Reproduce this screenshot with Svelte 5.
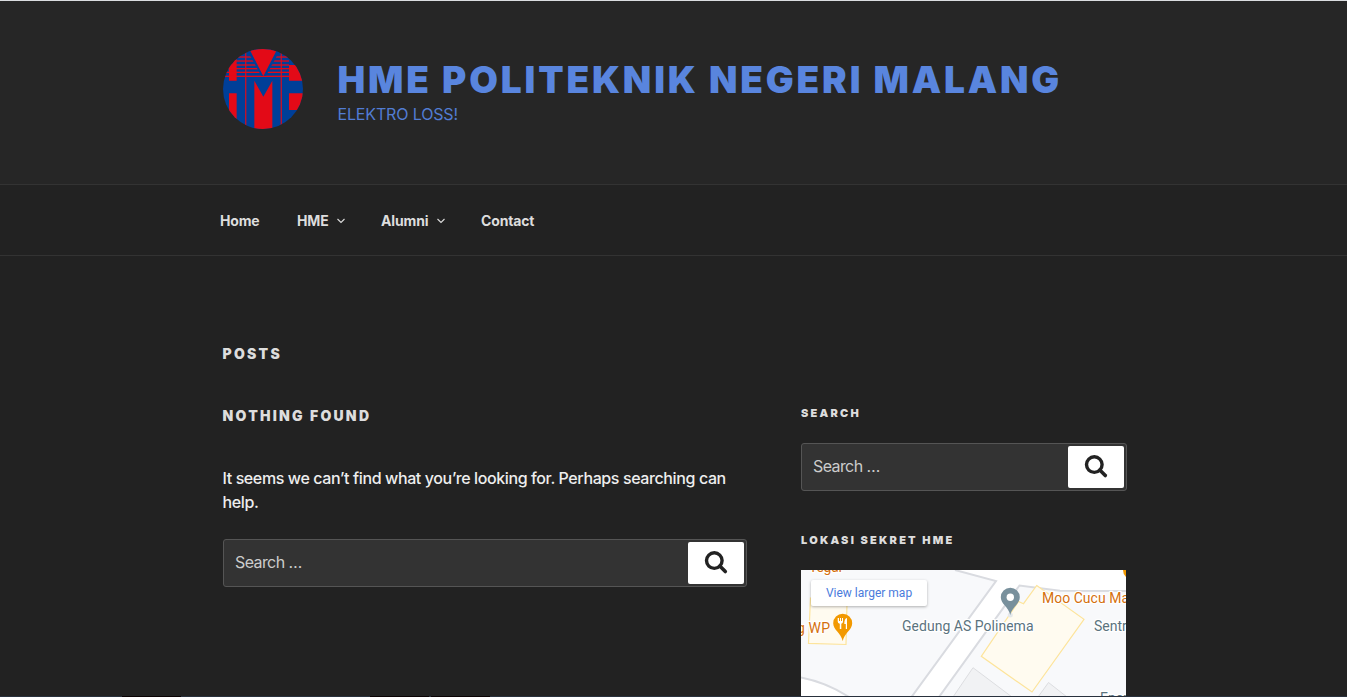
<script>
  const menu = [
    { label: 'Home', sub: false, w: 41 },
    { label: 'HME', sub: true, w: 32 },
    { label: 'Alumni', sub: true, w: 48 },
    { label: 'Contact', sub: false, w: 54 }
  ];
  const stripes = [22, 34, 46, 57, 68, 80];
</script>

{#snippet searchForm()}
  <form class="search-form" onsubmit={(e) => e.preventDefault()}>
    <span class="placeholder">Search …</span>
    <button type="submit" aria-label="Search">
      <svg width="24" height="24" viewBox="0 0 24 24" fill="none" stroke="#222" stroke-width="3.4">
        <circle cx="10.300" cy="9.600" r="7.800" />
        <path d="M15.800 15L21.300 20.500" stroke-linecap="round" stroke-width="3.600" />
      </svg>
    </button>
  </form>
{/snippet}

<div class="page">
  <header class="branding">
    <svg class="logo" width="80" height="80" viewBox="0 0 240 240">
      <defs><clipPath id="disc"><circle cx="120" cy="120" r="120" /></clipPath></defs>
      <g clip-path="url(#disc)">
        <rect width="240" height="240" fill="#003f98" />
        <g fill="#e30a17">
          <path d="M18 0H41V95H18Z M198 48H240V95H198Z M18 133H41V240H18Z M198 133H240V183H198Z" />
          {#each stripes as y}
            <rect x="0" {y} width="198" height="4" />
          {/each}
          <rect x="66.500" width="3.500" height="240" />
          <rect x="173" width="3.500" height="240" />
        </g>
        <path d="M70 0H173L129 80H115L70 0Z" fill="#003f98" />
        <path d="M79 0H163L121 82Z M94 95L121 143L148 95V240H94Z" fill="#e30a17" />
      </g>
    </svg>
    <div class="titles">
      <h1>HME POLITEKNIK NEGERI MALANG</h1>
      <p>ELEKTRO LOSS!</p>
    </div>
  </header>

  <nav>
    {#each menu as item}
      <a href="#top"><span style="width:{item.w}px">{item.label}</span>{#if item.sub}<svg width="8" height="6" viewBox="0 0 8 6"><path d="M0.500 1L4 4.500L7.500 1" fill="none" stroke="#ddd" stroke-width="1.100" /></svg>{/if}</a>
    {/each}
  </nav>

  <div class="content">
    <main>
      <h2>POSTS</h2>
      <h2 class="nothing">NOTHING FOUND</h2>
      <p class="message">It seems we can’t find what you’re looking for. Perhaps searching can<br />help.</p>
      {@render searchForm()}
    </main>
    <aside>
      <h3>SEARCH</h3>
      {@render searchForm()}
      <h3 class="location">LOKASI SEKRET HME</h3>
      <div class="map">
        <svg width="325" height="126" viewBox="0 0 325 126">
          <rect width="325" height="126" fill="#f8f9fb" />
          <path d="M154 0L195 11L110.500 127H138L218.500 15.500L259 20.700L325 21V0Z" fill="#fff" />
          <path d="M0 107.500C18 111 34 118 48 127H0Z" fill="#fff" />
          <g fill="none" stroke="#d9dbe0" stroke-width="2">
            <path d="M154 0L195 11L110.500 127M138 127L218.500 15.500L259 20.700L325 21M0 107.500C18 111 34 118 48 127" />
          </g>
          <path d="M152 127L172 97.700L211 127ZM237 127L247.500 112.500L266 127Z" fill="#f1f2f4" stroke="#dcdde0" />
          <g fill="#fffbf0" stroke="#fde49b" stroke-width="1.200">
            <path d="M9.500 28L46 33L45 74.500L7.500 73.300Z" />
            <path d="M235.700 15.500L283 49.300L231 122L180.300 86.300L217.500 31.500L222.500 33.700Z" />
          </g>
          <circle cx="209.300" cy="45" r="2.500" fill="#e5e8ea" />
          <path d="M209.300 45C207.500 37 199.800 34 199.800 27.300A9.500 9.500 0 0 1 218.800 27.300C218.800 34 211 37 209.300 45Z" fill="#78909c" />
          <circle cx="209.300" cy="27.300" r="3.700" fill="#fff" />
          <path d="M41.700 71C40 63 32.200 60 32.200 53.300A9.500 9.500 0 0 1 51.200 53.300C51.200 60 43.500 63 41.700 71Z" fill="#f29900" />
          <path d="M36.700 48V51.500Q36.700 53.500 38.800 53.700V59H40.300V53.700Q42 53.500 42 51.500V48H41V51H40V48H39V51H38V48ZM46 48Q43.300 48.500 43.300 54H44.800V59H46Z" fill="#fff" />
          <circle cx="331.500" cy="0" r="9.500" fill="#f29900" />
          <g class="places" stroke="#fff" stroke-width="2.500" paint-order="stroke" stroke-linejoin="round">
            <g fill="#d5700e">
              <text x="8" y="2.300" textLength="33">Tegal</text>
              <text x="-4" y="63" textLength="33">g WP</text>
              <text x="241" y="33" textLength="87">Moo Cucu Ma</text>
            </g>
            <g fill="#5b737e">
              <text x="101" y="61" textLength="131.500">Gedung AS Polinema</text>
              <text x="293" y="61">Sentra</text>
              <text x="299" y="133">Energi</text>
            </g>
          </g>
        </svg>
        <a class="larger" href="#map">View larger map</a>
      </div>
    </aside>
  </div>
  <div class="edge"><i></i><i></i><i></i></div>
</div>

<style>
  :global(body) { background: #222; overflow: hidden; }
  * { box-sizing: border-box; }
  .page {
    height: 697px;
    display: flex;
    flex-direction: column;
    overflow: hidden;
    background: #222;
    color: #eee;
    font-family: Inter, "Liberation Sans", sans-serif;
    font-size: 16px;
  }
  h1, h2, h3, p { margin: 0; white-space: nowrap; }
  a { text-decoration: none; color: inherit; }
  .branding {
    flex: none;
    height: 184px;
    border-top: 1px solid #dadde0;
    background: #262626;
    padding: 48px 223px 0;
    display: flex;
    gap: 34.500px;
    color: #5985de;
  }
  .logo { flex: none; }
  h1 { margin-top: 8px; font-size: 37px; line-height: 45px; font-weight: 900; letter-spacing: 2.850px; }
  .titles p { margin-top: 1px; line-height: 22px; letter-spacing: -0.150px; color: #527cd3; }
  nav {
    flex: none;
    height: 72px;
    border: solid #333;
    border-width: 1px 0;
    padding: 0 220px;
    display: flex;
    align-items: center;
    gap: 36px;
    font-size: 14px;
    font-weight: 650;
    color: #ddd;
  }
  nav a { display: flex; align-items: center; gap: 8px; }
  nav svg { position: relative; top: 1px; }
  nav span { white-space: nowrap; letter-spacing: -0.150px; }
  .content { flex: 1; min-height: 0; padding: 0 220px 0 222px; display: flex; gap: 54px; }
  main { width: 525px; padding-top: 88px; }
  aside { width: 326px; padding-top: 147px; }
  h2 { padding-left: 0.500px; font-size: 14px; line-height: 20px; font-weight: 900; letter-spacing: 2.250px; color: #ddd; }
  .nothing { margin-top: 42px; }
  .message { margin: 40px 0 25px; padding-left: 0.500px; line-height: 24px; font-weight: 450; letter-spacing: -0.390px; }
  h3 { font-size: 11px; line-height: 20px; font-weight: 900; letter-spacing: 2.220px; color: #ddd; }
  .search-form {
    height: 48px;
    border: 1px solid #555;
    border-radius: 3px;
    background: #333;
    display: flex;
    justify-content: space-between;
    padding: 2px 2px 2px 11px;
    color: #ccc;
    letter-spacing: -0.600px;
  }
  main .search-form { margin-left: 1px; }
  .placeholder { line-height: 40px; }
  button { width: 56px; height: 42px; border: 0; border-radius: 2px; background: #fff; padding: 0; display: grid; place-items: center; }
  aside .search-form { margin-top: 20px; }
  .location { margin-top: 39px; }
  .map { position: relative; margin-top: 20px; width: 325px; height: 126px; overflow: hidden; font-family: Roboto, sans-serif; }
  .map svg { display: block; }
  .places { font-size: 14px; }
  .larger {
    position: absolute;
    left: 10px;
    top: 10px;
    width: 116px;
    height: 26px;
    border-radius: 2px;
    background: #fff;
    box-shadow: 0 1px 3px rgba(0, 0, 0, 0.3);
    color: #4a7bdc;
    font-size: 12px;
    line-height: 26px;
    text-align: center;
  }
  .edge { flex: none; height: 1px; background: #29313d; display: flex; gap: 2px; padding-left: 122px; }
  .edge i { width: 59px; background: #0a0305; }
  .edge i:first-child { margin-right: 187px; }
</style>
